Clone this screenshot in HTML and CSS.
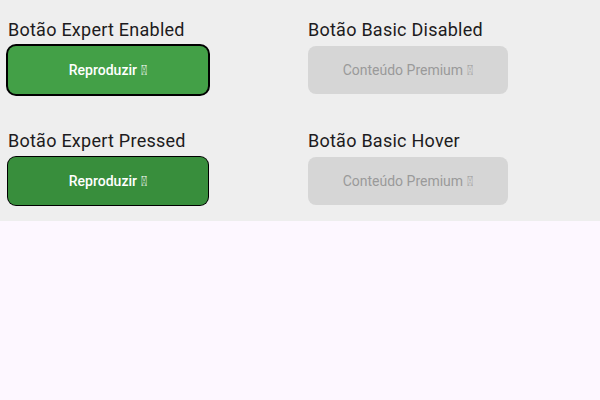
FILE: index.html
```html
<!DOCTYPE html>
<html lang="pt">
<head>
<meta charset="utf-8">
<link rel="stylesheet" href="styles.css">
</head>
<body>
<section class="panel">
  <div class="cell">
    <div class="title">Botão Expert Enabled</div>
    <button class="btn expert enabled">Reproduzir <span class="emo">&#xE000;</span></button>
  </div>
  <div class="cell">
    <div class="title">Botão Basic Disabled</div>
    <button class="btn basic">Conteúdo Premium <span class="emo">&#x10FFFD;</span></button>
  </div>
  <div class="cell">
    <div class="title">Botão Expert Pressed</div>
    <button class="btn expert pressed">Reproduzir <span class="emo">&#xE000;</span></button>
  </div>
  <div class="cell">
    <div class="title">Botão Basic Hover</div>
    <button class="btn basic">Conteúdo Premium <span class="emo">&#x10FFFD;</span></button>
  </div>
</section>
</body>
</html>
```
FILE: styles.css
```css
html, body {
  margin: 0;
  padding: 0;
  background: #fdf7ff;
  font-family: Roboto, "Noto Sans", sans-serif;
}
.panel {
  background: #eeeeee;
  display: grid;
  grid-template-columns: 300px 300px;
  row-gap: 36px;
  padding: 19px 0 16px 8px;
}
.cell {
  display: flex;
  flex-direction: column;
  align-items: flex-start;
}
.title {
  font-size: 18px;
  line-height: 21px;
  letter-spacing: 0.25px;
  color: #1d1b20;
  margin-bottom: 6px;
}
.btn {
  width: 200px;
  height: 48px;
  border: none;
  border-radius: 8px;
  font-family: Roboto, "Noto Sans", sans-serif;
  font-size: 14px;
  padding: 0;
  display: flex;
  align-items: center;
  justify-content: center;
}
.expert {
  color: #ffffff;
  font-weight: 500;
}
.enabled {
  background: #43a047;
  box-shadow: 0 0 0 2px #000000;
}
.pressed {
  background: #388e3c;
  box-shadow: 0 0 0 1px #000000;
}
.basic {
  background: #d6d6d6;
  color: #9a9a9a;
}
.emo {
  margin-left: 4px;
}
```
